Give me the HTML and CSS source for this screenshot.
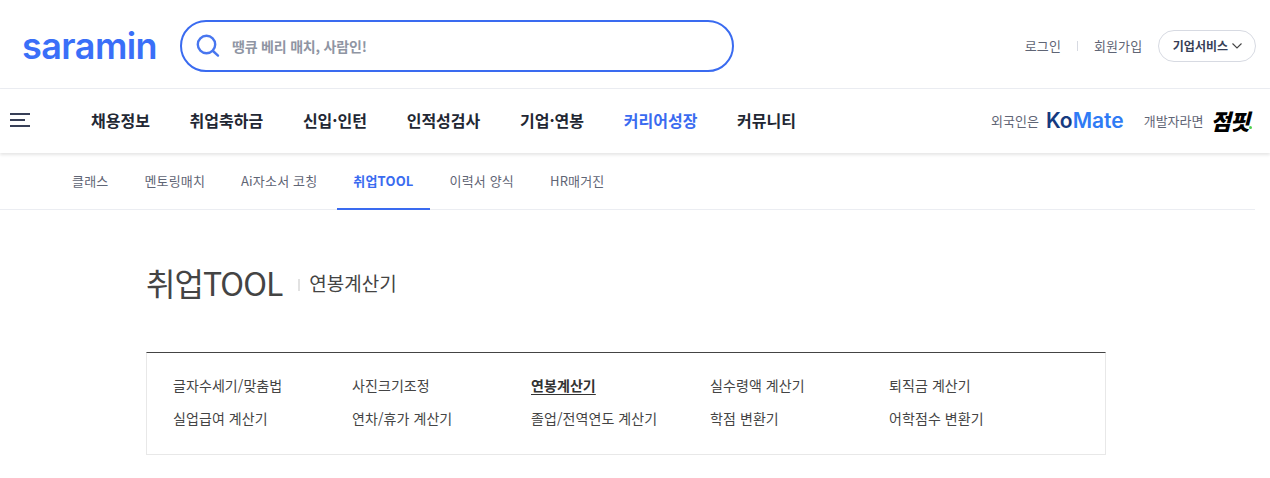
FILE: index.html
```html
<!DOCTYPE html>
<html lang="ko">
<head>
  <meta charset="UTF-8">
  <title>연봉계산기 - 사람인</title>
  <link rel="stylesheet" href="styles.css">
</head>
<body>
  <header class="top">
    <a class="logo">saramin</a>
    <div class="search">
      <svg class="search-icon" width="26" height="26" viewBox="0 0 26 26" fill="none" stroke="#4876ef" stroke-width="2.4" stroke-linecap="round">
        <circle cx="11.5" cy="11.5" r="8.7"/>
        <path d="M18 18l5 4.6"/>
      </svg>
      <span class="search-text">땡큐 베리 매치, 사람인!</span>
    </div>
    <div class="util">
      <a>로그인</a>
      <i class="util-bar"></i>
      <a>회원가입</a>
      <button class="biz">기업서비스
        <svg width="10" height="6" viewBox="0 0 10 6" fill="none" stroke="#444" stroke-width="1.1"><path d="M.5.5L5 5 9.5.5"/></svg>
      </button>
    </div>
  </header>

  <nav class="gnb">
    <svg class="burger" width="20" height="14" viewBox="0 0 20 14" fill="#373f57">
      <rect y="0" width="20" height="2"/>
      <rect y="6" width="15" height="2"/>
      <rect y="12" width="20" height="2"/>
    </svg>
    <ul class="gnb-list">
      <li>채용정보</li>
      <li>취업축하금</li>
      <li>신입·인턴</li>
      <li>인적성검사</li>
      <li>기업·연봉</li>
      <li class="on">커리어성장</li>
      <li>커뮤니티</li>
    </ul>
    <div class="promo">
      <span class="promo-label">외국인은</span>
      <span class="komate"><b>Ko</b>Mate</span>
      <span class="promo-label promo-gap">개발자라면</span>
      <span class="jumpit">점핏<i class="dot"></i></span>
    </div>
  </nav>

  <div class="lnb">
    <a>클래스</a>
    <a>멘토링매치</a>
    <a>Ai자소서 코칭</a>
    <a class="on">취업TOOL</a>
    <a>이력서 양식</a>
    <a>HR매거진</a>
  </div>

  <main class="content">
    <div class="title">
      <h1>취업TOOL</h1>
      <span class="sub">연봉계산기</span>
    </div>
    <ul class="tools">
      <li>글자수세기/맞춤법</li>
      <li>사진크기조정</li>
      <li class="on">연봉계산기</li>
      <li>실수령액 계산기</li>
      <li>퇴직금 계산기</li>
      <li>실업급여 계산기</li>
      <li>연차/휴가 계산기</li>
      <li>졸업/전역연도 계산기</li>
      <li>학점 변환기</li>
      <li>어학점수 변환기</li>
    </ul>
  </main>
</body>
</html>
```

FILE: styles.css
```css
* {
  box-sizing: border-box;
}
html, body {
  margin: 0;
  padding: 0;
  height: 478px;
  overflow: hidden;
}
body {
  font-family: "Noto Sans CJK KR", "Noto Sans", sans-serif;
  color: #373f57;
  background: #fff;
}
ul {
  list-style: none;
  margin: 0;
  padding: 0;
}

/* top */
.top {
  display: flex;
  align-items: center;
  height: 89px;
  padding: 3px 14px 0 22px;
  border-bottom: 1px solid #ebedf2;
}
.logo {
  width: 158px;
  flex: none;
  font-family: Inter, sans-serif;
  font-weight: 600;
  font-size: 36px;
  letter-spacing: -.55px;
  line-height: 50px;
  color: #3a6ff8;
}
.search {
  display: flex;
  align-items: center;
  width: 554px;
  height: 52px;
  padding-left: 13px;
  border: 2px solid #3a6bf0;
  border-radius: 26px;
}
.search-text {
  margin-left: 11px;
  font-size: 14px;
  font-weight: 700;
  color: #8f95a3;
  letter-spacing: -.2px;
}
.util {
  display: flex;
  align-items: center;
  margin-left: auto;
  font-size: 13px;
  letter-spacing: .1px;
  color: #5f6575;
}
.util-bar {
  width: 1px;
  height: 10px;
  margin: 0 16px;
  background: #d7dae2;
}
.biz {
  display: flex;
  align-items: center;
  gap: 4px;
  height: 32px;
  margin-left: 16px;
  padding: 0 13px 0 13.6px;
  border: 1px solid #d7dae2;
  border-radius: 16px;
  background: #fff;
  font-family: inherit;
  font-size: 12px;
  font-weight: 700;
  color: #373f57;
}

/* main nav */
.gnb {
  position: relative;
  display: flex;
  align-items: center;
  height: 64px;
  padding: 0 18px 2px 10px;
  box-shadow: 0 2px 3px rgba(0, 0, 0, .1);
}
.gnb-list {
  display: flex;
  gap: 39.7px;
  margin-left: 61px;
  font-size: 16px;
  font-weight: 700;
  color: #222733;
}
.gnb-list .on {
  color: #3a6bf0;
}
.promo {
  display: flex;
  align-items: center;
  margin-left: auto;
}
.promo-label {
  font-size: 13px;
  color: #5f6575;
}
.promo-gap {
  margin-left: 20px;
}
.komate {
  margin-left: 7px;
  font-family: Inter, sans-serif;
  font-weight: 600;
  font-size: 21px;
  letter-spacing: 0;
  color: #2f7bf5;
}
.komate b {
  font-weight: 600;
  color: #163a80;
}
.jumpit {
  position: relative;
  margin-left: 7px;
  padding-right: 3px;
  font-size: 22px;
  font-weight: 900;
  font-style: italic;
  letter-spacing: -1px;
  color: #000;
}
.dot {
  position: absolute;
  right: 0;
  bottom: 7px;
  width: 3px;
  height: 3px;
  border-radius: 50%;
  background: #4fd04f;
}

/* sub nav */
.lnb {
  display: flex;
  width: 1255px;
  height: 57px;
  padding-left: 56px;
  border-bottom: 1px solid #ebedf2;
  font-size: 13px;
  letter-spacing: .17px;
  color: #5f6575;
}
.lnb a {
  padding: 0 16px;
  line-height: 55px;
  margin-right: 4px;
}
.lnb .on {
  height: 57px;
  border-bottom: 2px solid #3a6bf0;
  font-weight: 700;
  color: #3a6bf0;
}

/* content */
.content {
  width: 960px;
  margin-left: 146px;
}
.title {
  display: flex;
  align-items: center;
  height: 49px;
  margin-top: 47px;
}
.title h1 {
  margin: 0;
  font-size: 32px;
  font-weight: 400;
  letter-spacing: -.95px;
  color: #444;
}
.sub {
  margin-left: 16px;
  margin-top: 2px;
  padding-left: 11px;
  position: relative;
  font-size: 19px;
  color: #444;
}
.sub::before {
  content: "";
  position: absolute;
  left: 0;
  top: 10px;
  width: 2px;
  height: 12px;
  background: #e2e2e2;
}
.tools {
  display: grid;
  grid-template-columns: repeat(5, 179px);
  grid-auto-rows: 33px;
  align-items: center;
  height: 103px;
  margin-top: 46px;
  padding: 15px 26px 0;
  border: 1px solid #e8e8e8;
  border-top: 1px solid #444;
  font-size: 14px;
  letter-spacing: .08px;
  color: #444;
}
.tools .on {
  font-weight: 700;
  color: #333;
  text-decoration: underline;
  text-underline-offset: 3px;
}
```
